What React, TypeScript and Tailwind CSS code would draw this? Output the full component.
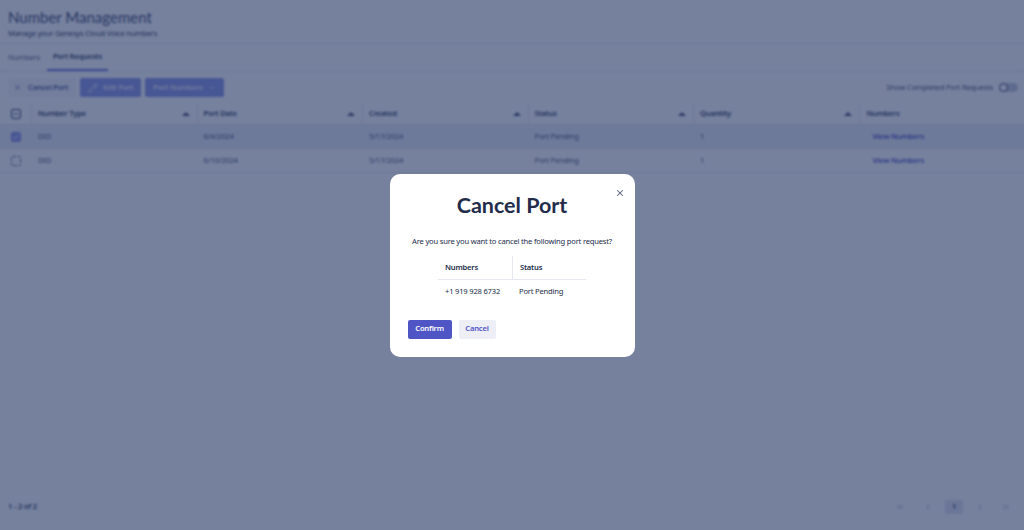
import { Check, ChevronDown, ChevronLeft, ChevronRight, ChevronsLeft, ChevronsRight, Minus, Pencil, X } from "lucide-react";

const columns = ["Number Type", "Port Date", "Created", "Status", "Quantity"];

const rows = [
  { date: "6/4/2024", selected: true },
  { date: "6/10/2024", selected: false },
];

function PortRow({ date, selected }: { date: string; selected: boolean }) {
  return (
    <div className={`flex h-[24px] items-center border-b border-[#e6e8f0] text-[7.6px] tracking-[-0.2px] text-[#4a5478] ${selected ? "bg-[#ecedf6]" : ""}`}>
      <div className="flex w-[31px] justify-center">
        <span className={`flex h-[10px] w-[10px] items-center justify-center rounded-[2px] border border-dashed ${selected ? "border-[#7f88dc] bg-[#8a92e6]" : "border-[#4a5478]"}`}>
          {selected && <Check className="h-2 w-2 text-white" strokeWidth={3} />}
        </span>
      </div>
      <div className="w-[165.5px] pl-[7px]">DID</div>
      <div className="w-[165.5px] pl-[7px]">{date}</div>
      <div className="w-[165.5px] pl-[7px]">5/17/2024</div>
      <div className="w-[165.5px] pl-[7px]">Port Pending</div>
      <div className="w-[165.5px] pl-[7px]">1</div>
      <div className="flex-1 pl-[7px]">
        <span className="rounded-[2px] px-[7px] py-[4px] font-semibold text-[#4f55c4]">View Numbers</span>
      </div>
    </div>
  );
}

function Background() {
  return (
    <div className="flex h-[530px] flex-col bg-white text-[#2f3a60]">
      <div className="flex h-[44px] flex-col border-b border-[#e6e8f0] pl-[8px] pt-[8px]">
        <h1 className="font-['Lato'] text-[15px] font-normal leading-[18px] text-[#3d476e]">Number Management</h1>
        <p className="mt-[1px] text-[7.6px] leading-[12px] tracking-[-0.2px] text-[#2f3a60]">Manage your Genesys Cloud Voice numbers</p>
      </div>
      <div className="flex h-[28px] items-end border-b border-[#e6e8f0] pl-[8px] text-[7.6px] tracking-[-0.2px]">
        <span className="flex h-[26px] items-center text-[#5a6385]">Numbers</span>
        <span className="ml-[7px] flex h-[26px] items-center border-b-2 border-[#6a72d8] px-[6px] font-semibold text-[#2f3a60]">Port Requests</span>
      </div>
      <div className="flex h-[31px] items-center gap-[4px] pl-[8px] pr-[6px] text-[7.6px] font-semibold tracking-[-0.2px]">
        <button className="flex h-[19px] items-center gap-[6px] rounded-[2px] bg-[#f7f7fc] pl-[5px] pr-[8px] text-[#4f5a9a]">
          <X className="h-[9px] w-[9px]" />
          Cancel Port
        </button>
        <button className="flex h-[19px] items-center gap-[5px] rounded-[2px] bg-[#8b95e6] px-[8px] text-[#e8eaff]">
          <Pencil className="h-[10px] w-[10px]" />
          Edit Port
        </button>
        <button className="flex h-[19px] items-center gap-[5px] rounded-[2px] bg-[#8b95e6] px-[8px] text-[#e8eaff]">
          Port Numbers
          <ChevronDown className="h-[8px] w-[8px]" />
        </button>
        <div className="ml-auto flex items-center gap-[6px] font-normal text-[#4a5478]">
          Show Completed Port Requests
          <span className="flex h-[9px] w-[19px] items-center rounded-full bg-[#c4c8d8]">
            <span className="h-[9px] w-[9px] rounded-full border border-[#2f3a60] bg-white" />
          </span>
        </div>
      </div>
      <div className="flex h-[22px] items-center border-b border-[#e6e8f0] text-[7.6px] font-semibold tracking-[-0.2px] text-[#2f3a60]">
        <div className="flex w-[31px] justify-center">
          <span className="flex h-[10px] w-[10px] items-center justify-center rounded-[2px] border border-[#2f3a60]">
            <Minus className="h-2 w-2" strokeWidth={2.5} />
          </span>
        </div>
        {columns.map((label) => (
          <div key={label} className="flex h-full w-[165.5px] items-center justify-between border-l border-[#e6e8f0] pl-[6px] pr-[7px]">
            {label}
            <span className="h-0 w-0 border-x-[4px] border-b-[4px] border-x-transparent border-b-[#4a5478]" />
          </div>
        ))}
        <div className="flex h-full flex-1 items-center border-l border-[#e6e8f0] pl-[7px]">Numbers</div>
      </div>
      {rows.map((row) => (
        <PortRow key={row.date} date={row.date} selected={row.selected} />
      ))}
      <div className="mt-auto flex h-[46px] items-center justify-between pl-[8px] pr-[13px] text-[7.6px] font-semibold tracking-[-0.2px] text-[#2f3a60]">
        <span>1 - 2 of 2</span>
        <div className="flex items-center gap-[12px] text-[#a0a7be]">
          <ChevronsLeft className="h-[10px] w-[10px]" />
          <ChevronLeft className="ml-[6px] h-[10px] w-[10px]" />
          <span className="flex h-[14px] w-[18px] items-center justify-center rounded-[2px] bg-[#e4e5f0] text-[#2f3a60]">1</span>
          <ChevronRight className="h-[10px] w-[10px]" />
          <ChevronsRight className="ml-[4px] h-[10px] w-[10px]" />
        </div>
      </div>
    </div>
  );
}

function CancelPortModal() {
  return (
    <div className="absolute inset-0 flex items-center justify-center bg-[rgba(27,45,93,0.6)] backdrop-blur-[1px]">
      <div className="relative flex h-[183px] w-[245px] flex-col items-center rounded-[10px] bg-white px-[18px] text-[#222c4a]">
        <button className="absolute right-[10px] top-[14px] text-[#5a6380]">
          <X className="h-[10px] w-[10px]" strokeWidth={2.5} />
        </button>
        <h2 className="mt-[16px] font-['Lato'] text-[21.5px] font-bold leading-[30px]">Cancel Port</h2>
        <p className="mt-[15px] whitespace-nowrap text-[7.6px] leading-[12px] tracking-[-0.2px]">Are you sure you want to cancel the following port request?</p>
        <div className="mt-[9px] w-[148px] text-[7.6px] tracking-[-0.2px]">
          <div className="flex h-[24px] border-b border-[#e6e8f0] font-semibold">
            <div className="flex w-[74px] items-center pl-[7px] pt-[1px]">Numbers</div>
            <div className="flex flex-1 items-center border-l border-[#e6e8f0] pl-[7px] pt-[1px]">Status</div>
          </div>
          <div className="flex h-[24px] items-center">
            <div className="w-[74px] pl-[7px]">+1 919 928 6732</div>
            <div className="flex-1 pl-[7px]">Port Pending</div>
          </div>
        </div>
        <div className="mt-[16px] flex gap-[7px] self-start text-[7.6px] font-semibold tracking-[-0.2px]">
          <button className="h-[19px] w-[44px] rounded-[2px] bg-[#4f55c4] text-white">Confirm</button>
          <button className="h-[19px] w-[37px] rounded-[2px] bg-[#eeeef7] text-[#4f55c4]">Cancel</button>
        </div>
      </div>
    </div>
  );
}

export default function App() {
  return (
    <div className="relative h-[530px] w-[1024px] overflow-hidden font-['Noto_Sans',sans-serif]">
      <Background />
      <CancelPortModal />
    </div>
  );
}
